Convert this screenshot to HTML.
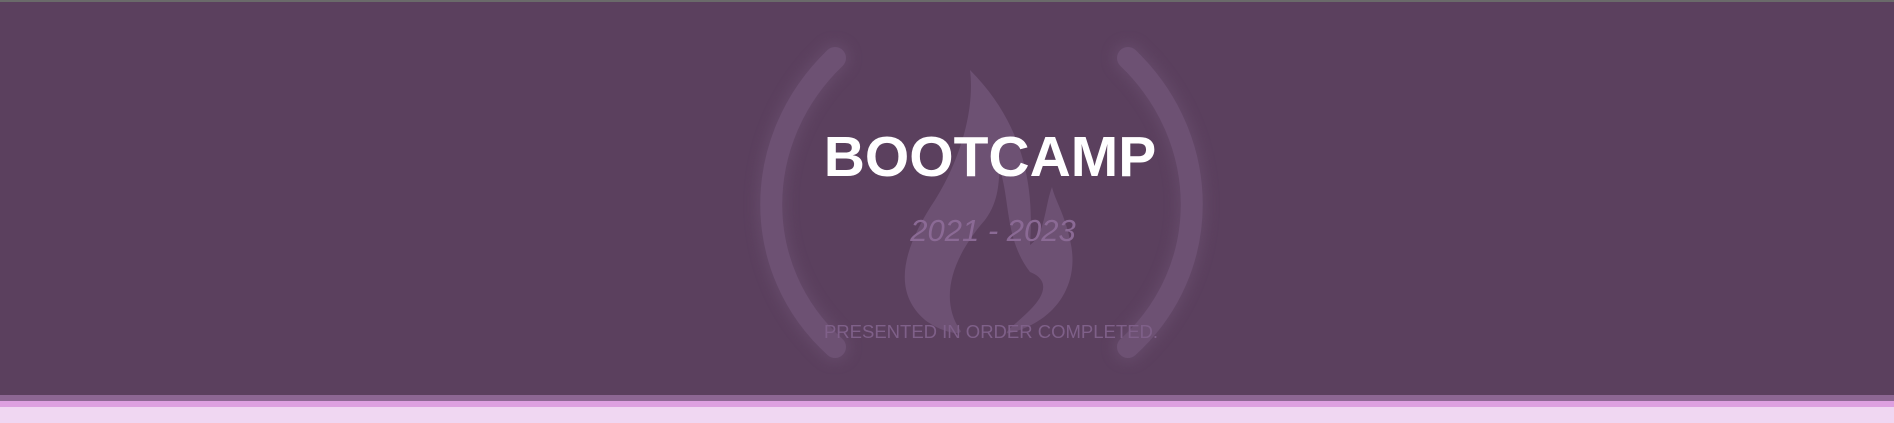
<!DOCTYPE html>
<html><head><style>
html,body{margin:0;padding:0;}
body{width:1894px;height:423px;position:relative;overflow:hidden;background:#5b405e;font-family:"Liberation Sans",sans-serif;}
.top{position:absolute;left:0;top:0;width:100%;height:2px;background:#6a6a6a;}
.s1{position:absolute;left:0;top:395px;width:100%;height:6px;background:#8d6793;}
.s2{position:absolute;left:0;top:401px;width:100%;height:6px;background:#dda0e0;}
.s3{position:absolute;left:0;top:407px;width:100%;height:16px;background:#f0d7f2;}
svg{position:absolute;left:0;top:0;}
.t{position:absolute;width:1894px;text-align:center;}
h1{margin:0;left:43px;top:124px;font-size:57px;font-weight:bold;color:#fff;}
.y{left:46px;top:213px;font-size:31px;font-style:italic;color:#8b6a95;}
.p{left:44px;top:321px;font-size:18.5px;color:#7f6089;}
</style></head><body>
<div class="top"></div>
<svg width="1894" height="395" viewBox="0 0 1894 395">
<defs><filter id="g" x="-50%" y="-50%" width="200%" height="200%"><feGaussianBlur stdDeviation="6"/></filter></defs>
<g stroke="#6a4f70" stroke-width="30" fill="none" stroke-linecap="round" filter="url(#g)" opacity="0.6">
<path d="M835,58 C750,140 750,270 835,347"/>
<path d="M1128,58 C1213,140 1213,270 1128,347"/>
</g>
<g stroke="#6d5173" stroke-width="22" fill="none" stroke-linecap="round">
<path d="M835,58 C750,140 750,270 835,347"/>
<path d="M1128,58 C1213,140 1213,270 1128,347"/>
</g>
<path fill="#6d5173" d="M970,70 C975,110 960,160 935,200 C905,245 890,290 925,320 C945,335 965,335 960,330 C940,300 950,260 985,220 C1000,200 998,180 1000,170 C1010,200 1005,240 1030,272 C1050,280 1045,295 1030,310 C1015,325 1000,335 1010,333 C1060,320 1080,280 1070,240 C1065,215 1055,200 1052,187 C1045,205 1045,235 1030,245 C1035,180 1020,120 970,70 Z"/>
</svg>
<h1 class="t">BOOTCAMP</h1>
<div class="t y">2021 - 2023</div>
<div class="t p">PRESENTED IN ORDER COMPLETED.</div>
<div class="s1"></div><div class="s2"></div><div class="s3"></div>
</body></html>
